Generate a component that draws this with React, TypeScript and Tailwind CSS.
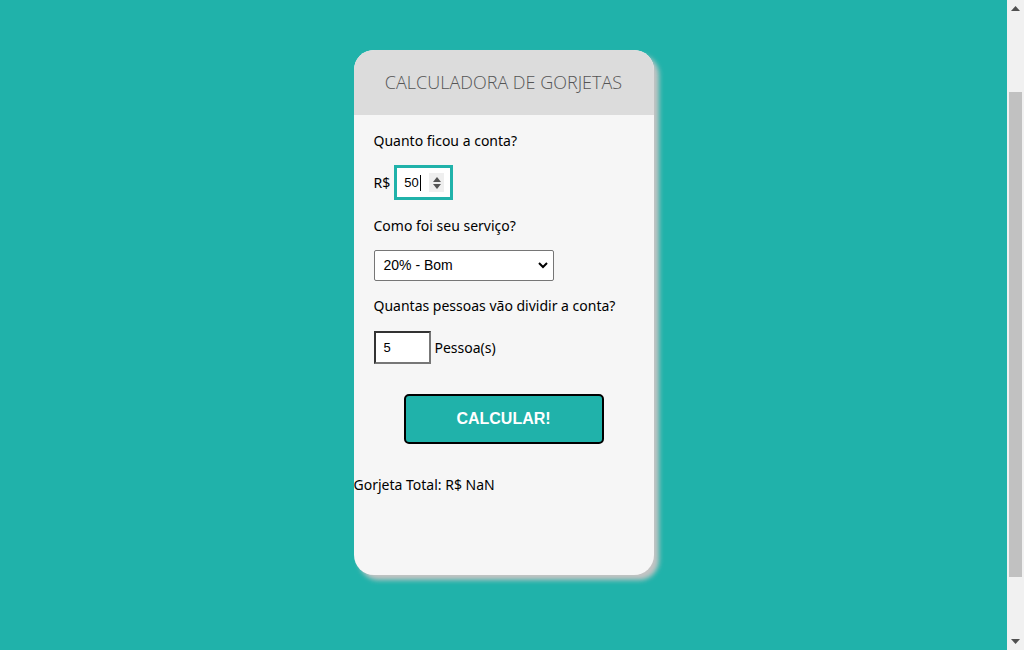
import React from "react";

export default function App() {
  return (
    <div className="flex h-[650px] w-[1024px] overflow-hidden bg-[#20b2aa]" style={{ fontFamily: '"Noto Sans", sans-serif' }}>
      <div className="flex flex-1 justify-center pt-[50px]">
        <div className="flex h-[525px] w-[300px] flex-col overflow-hidden rounded-[20px] bg-[#f6f6f6] shadow-[5px_5px_5px_#c4c4c4]">
          <div className="flex h-[65px] items-center justify-center bg-[#dcdcdc] text-[18px] font-light text-[#555]" style={{ fontFamily: '"Open Sans", sans-serif' }}>
            CALCULADORA DE GORJETAS
          </div>
          <div className="flex flex-col px-5 pt-[16px] text-[14px] text-black">
            <div className="h-[20px] leading-[20px]">Quanto ficou a conta?</div>
            <div className="mt-[14px] flex items-center gap-[4px]">
              <span>R$</span>
              <div className="flex h-[35px] w-[59px] items-center border-[3px] border-[#20b2aa] bg-white pl-[7px] pr-[6px]">
                <span className="text-[13px]" style={{ fontFamily: '"Liberation Sans", sans-serif' }}>50</span>
                <span className="ml-[1px] h-[16px] w-px bg-black" />
                <div className="ml-auto flex h-[19px] w-[15px] flex-col items-center justify-center gap-[2px] bg-[#efefef]">
                  <svg width="8" height="5" viewBox="0 0 8 5"><path d="M0 5 L4 0 L8 5 Z" fill="#555" /></svg>
                  <svg width="8" height="5" viewBox="0 0 8 5"><path d="M0 0 L4 5 L8 0 Z" fill="#555" /></svg>
                </div>
              </div>
            </div>
            <div className="mt-[16px] h-[20px] leading-[20px]">Como foi seu serviço?</div>
            <div className="mt-[14px] flex h-[31px] w-[180px] items-center justify-between rounded-[2px] border border-[#767676] bg-white pl-[9px] pr-[5px] text-[14px]" style={{ fontFamily: '"Liberation Sans", sans-serif' }}>
              <span>20% - Bom</span>
              <svg width="10" height="7" viewBox="0 0 10 7"><path d="M1 1 L5 5 L9 1" stroke="#000" strokeWidth="2" fill="none" /></svg>
            </div>
            <div className="mt-[15px] h-[20px] leading-[20px]">Quantas pessoas vão dividir a conta?</div>
            <div className="mt-[15px] flex items-center gap-[4px]">
              <div className="flex h-[33px] w-[57px] items-center border-2 border-t-[#333] border-l-[#333] border-r-[#777] border-b-[#777] bg-white pl-[8px] text-[13px]" style={{ fontFamily: '"Liberation Sans", sans-serif' }}>
                5
              </div>
              <span className="-mt-[1px]">Pessoa(s)</span>
            </div>
            <div className="mt-[30px] flex justify-center">
              <button className="flex h-[50px] w-[200px] items-center justify-center rounded-[5px] border-2 border-black bg-[#20b2aa] text-[16px] font-bold text-white" style={{ fontFamily: '"Liberation Sans", sans-serif' }}>
                CALCULAR!
              </button>
            </div>
          </div>
          <div className="mt-[30px] text-[14px] text-black">Gorjeta Total: R$ NaN</div>
        </div>
      </div>
      <div className="relative h-full w-[17px] bg-[#f1f1f1]">
        <svg className="absolute left-[4px] top-[6px]" width="9" height="5" viewBox="0 0 9 5"><path d="M0 5 L4.5 0 L9 5 Z" fill="#505050" /></svg>
        <div className="absolute left-[2px] top-[92px] h-[485px] w-[13px] bg-[#c1c1c1]" />
        <svg className="absolute bottom-[6px] left-[4px]" width="9" height="5" viewBox="0 0 9 5"><path d="M0 0 L4.5 5 L9 0 Z" fill="#505050" /></svg>
      </div>
    </div>
  );
}
